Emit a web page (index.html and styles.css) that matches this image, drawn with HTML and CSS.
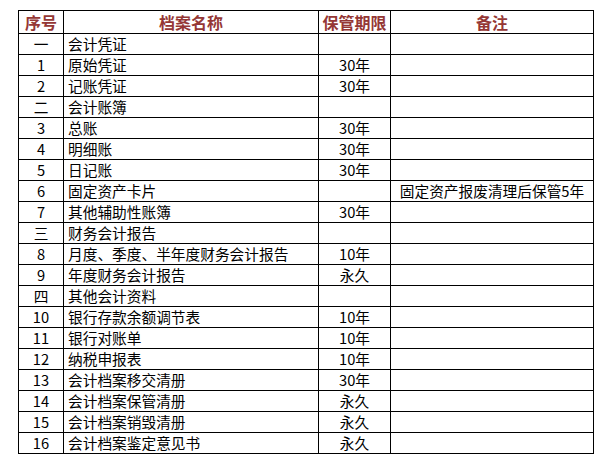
FILE: index.html
```html
<!DOCTYPE html>
<html lang="zh-CN">
<head>
<meta charset="utf-8">
<title>会计档案保管期限</title>
<link rel="stylesheet" href="styles.css">
</head>
<body>
<table class="archive">
  <colgroup>
    <col class="c-no">
    <col class="c-name">
    <col class="c-term">
    <col class="c-note">
  </colgroup>
  <thead>
    <tr><th>序号</th><th>档案名称</th><th>保管期限</th><th>备注</th></tr>
  </thead>
  <tbody>
    <tr><td class="no">一</td><td class="name">会计凭证</td><td class="term"></td><td class="note"></td></tr>
    <tr><td class="no">1</td><td class="name">原始凭证</td><td class="term">30年</td><td class="note"></td></tr>
    <tr><td class="no">2</td><td class="name">记账凭证</td><td class="term">30年</td><td class="note"></td></tr>
    <tr><td class="no">二</td><td class="name">会计账簿</td><td class="term"></td><td class="note"></td></tr>
    <tr><td class="no">3</td><td class="name">总账</td><td class="term">30年</td><td class="note"></td></tr>
    <tr><td class="no">4</td><td class="name">明细账</td><td class="term">30年</td><td class="note"></td></tr>
    <tr><td class="no">5</td><td class="name">日记账</td><td class="term">30年</td><td class="note"></td></tr>
    <tr><td class="no">6</td><td class="name">固定资产卡片</td><td class="term"></td><td class="note">固定资产报废清理后保管5年</td></tr>
    <tr><td class="no">7</td><td class="name">其他辅助性账簿</td><td class="term">30年</td><td class="note"></td></tr>
    <tr><td class="no">三</td><td class="name">财务会计报告</td><td class="term"></td><td class="note"></td></tr>
    <tr><td class="no">8</td><td class="name">月度、季度、半年度财务会计报告</td><td class="term">10年</td><td class="note"></td></tr>
    <tr><td class="no">9</td><td class="name">年度财务会计报告</td><td class="term">永久</td><td class="note"></td></tr>
    <tr><td class="no">四</td><td class="name">其他会计资料</td><td class="term"></td><td class="note"></td></tr>
    <tr><td class="no">10</td><td class="name">银行存款余额调节表</td><td class="term">10年</td><td class="note"></td></tr>
    <tr><td class="no">11</td><td class="name">银行对账单</td><td class="term">10年</td><td class="note"></td></tr>
    <tr><td class="no">12</td><td class="name">纳税申报表</td><td class="term">10年</td><td class="note"></td></tr>
    <tr><td class="no">13</td><td class="name">会计档案移交清册</td><td class="term">30年</td><td class="note"></td></tr>
    <tr><td class="no">14</td><td class="name">会计档案保管清册</td><td class="term">永久</td><td class="note"></td></tr>
    <tr><td class="no">15</td><td class="name">会计档案销毁清册</td><td class="term">永久</td><td class="note"></td></tr>
    <tr><td class="no">16</td><td class="name">会计档案鉴定意见书</td><td class="term">永久</td><td class="note"></td></tr>
  </tbody>
</table>
</body>
</html>
```

FILE: styles.css
```css
html, body {
  margin: 0;
  padding: 0;
  background: #ffffff;
}

body {
  padding: 10px 0 0 18px;
  font-family: "Noto Sans CJK SC", "Noto Sans", sans-serif;
  color: #000000;
}

.archive {
  border-collapse: collapse;
  table-layout: fixed;
  width: 575px;
}

.c-no { width: 45px; }
.c-name { width: 255px; }
.c-term { width: 72px; }
.c-note { width: 203px; }

.archive th,
.archive td {
  border: 1px solid #000000;
  padding: 0;
  white-space: nowrap;
  overflow: hidden;
}

.archive th {
  height: 22px;
  font-size: 16px;
  font-weight: bold;
  color: #953735;
  text-align: center;
  line-height: 22px;
}

.archive td {
  height: 20px;
  font-size: 14.7px;
  line-height: 20px;
}

.archive .no,
.archive .term,
.archive .note {
  text-align: center;
}

.archive .name {
  text-align: left;
  padding-left: 4px;
}
```
